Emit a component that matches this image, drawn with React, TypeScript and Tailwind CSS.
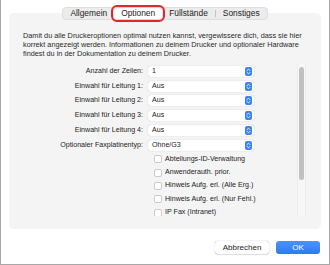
import { ChevronsUpDown } from 'lucide-react';

const selects = [
  { label: 'Anzahl der Zeilen:', value: '1' },
  { label: 'Einwahl für Leitung 1:', value: 'Aus' },
  { label: 'Einwahl für Leitung 2:', value: 'Aus' },
  { label: 'Einwahl für Leitung 3:', value: 'Aus' },
  { label: 'Einwahl für Leitung 4:', value: 'Aus' },
  { label: 'Optionaler Faxplatinentyp:', value: 'Ohne/G3' },
];

const checks = [
  'Abteilungs-ID-Verwaltung',
  'Anwenderauth. prior.',
  'Hinweis Aufg. erl. (Alle Erg.)',
  'Hinweis Aufg. erl. (Nur Fehl.)',
  'IP Fax (Intranet)',
];

const tabs = ['Allgemein', 'Optionen', 'Füllstände', 'Sonstiges'];

function Stepper() {
  return (
    <span className="w-[7px] h-[9px] rounded-[2px] bg-[#3a82f7] flex items-center justify-center text-white">
      <ChevronsUpDown size={7} strokeWidth={3} />
    </span>
  );
}

export default function App() {
  return (
    <div className="w-[330px] h-[265px] bg-white border-x border-b border-[#a8a8a8] font-['Liberation_Sans',sans-serif] text-[#232323] flex flex-col">
      {/* Panel */}
      <div className="mt-[13px] mx-[8px] h-[216px] bg-[#f4f4f4] rounded-[5px] flex flex-col">
        {/* Tabs */}
        <div className="-mt-[6px] self-center flex items-center h-[13px] bg-[#ececec] border border-[#dedede] rounded-[4px] text-[8.4px] leading-none">
          {tabs.map((tab, i) => (
            <div key={tab} className="flex items-center">
              {i === 3 && <span className="w-px h-[7px] bg-[#c4c4c4]" />}
              {tab === 'Optionen' ? (
                <span className="h-[11px] px-[7px] flex items-center bg-white rounded-[3px] shadow-[0_0_1px_rgba(0,0,0,0.35)] outline-2 outline-[#e3262b] outline-offset-[1px]">
                  {tab}
                </span>
              ) : (
                <span className="px-[7px] h-[11px] flex items-center">{tab}</span>
              )}
            </div>
          ))}
        </div>

        {/* Description */}
        <p className="mt-[11px] px-[14px] text-[7.3px] leading-[9px] text-[#2a2a2a]">
          Damit du alle Druckeroptionen optimal nutzen kannst, vergewissere dich, dass sie hier
          korrekt angezeigt werden. Informationen zu deinem Drucker und optionaler Hardware
          findest du in der Dokumentation zu deinem Drucker.
        </p>

        {/* Scroll area */}
        <div className="relative mt-[6px] h-[152px] overflow-hidden">
          <div className="flex flex-col text-[7.1px] leading-none">
            {selects.map(row => (
              <div key={row.label} className="h-[14.8px] flex items-center">
                <span className="w-[139px] text-right pr-[5px]">{row.label}</span>
                <div className="w-[106px] h-[11px] bg-white rounded-[3px] shadow-[0_0_1px_rgba(0,0,0,0.3)] flex items-center justify-between pl-[4px] pr-[2px]">
                  <span>{row.value}</span>
                  <Stepper />
                </div>
              </div>
            ))}
            {checks.map(c => (
              <div key={c} className="h-[13.3px] flex items-center pl-[145px] gap-[3px]">
                <span className="w-[8px] h-[8px] bg-white border border-[#cbcbcb] rounded-[2px]" />
                <span>{c}</span>
              </div>
            ))}
          </div>

          {/* Scrollbar */}
          <div className="absolute right-[15px] top-0 bottom-0 w-[9px] bg-[#f7f7f7] border-x border-[#ececec] flex justify-center pt-[3px]">
            <div className="w-[5px] h-[113px] rounded-full bg-[#c1c1c1]" />
          </div>
        </div>
      </div>

      {/* Buttons */}
      <div className="mt-[12px] flex justify-end gap-[7px] pr-[9px] text-[8px] leading-none">
        <button className="w-[54px] h-[13px] bg-white rounded-[3px] shadow-[0_0_1px_rgba(0,0,0,0.45),0_1px_1px_rgba(0,0,0,0.1)] text-[#232323]">
          Abbrechen
        </button>
        <button className="w-[44px] h-[13px] rounded-[3px] bg-gradient-to-b from-[#4a93fb] to-[#2f7af2] text-white">
          OK
        </button>
      </div>
    </div>
  );
}
